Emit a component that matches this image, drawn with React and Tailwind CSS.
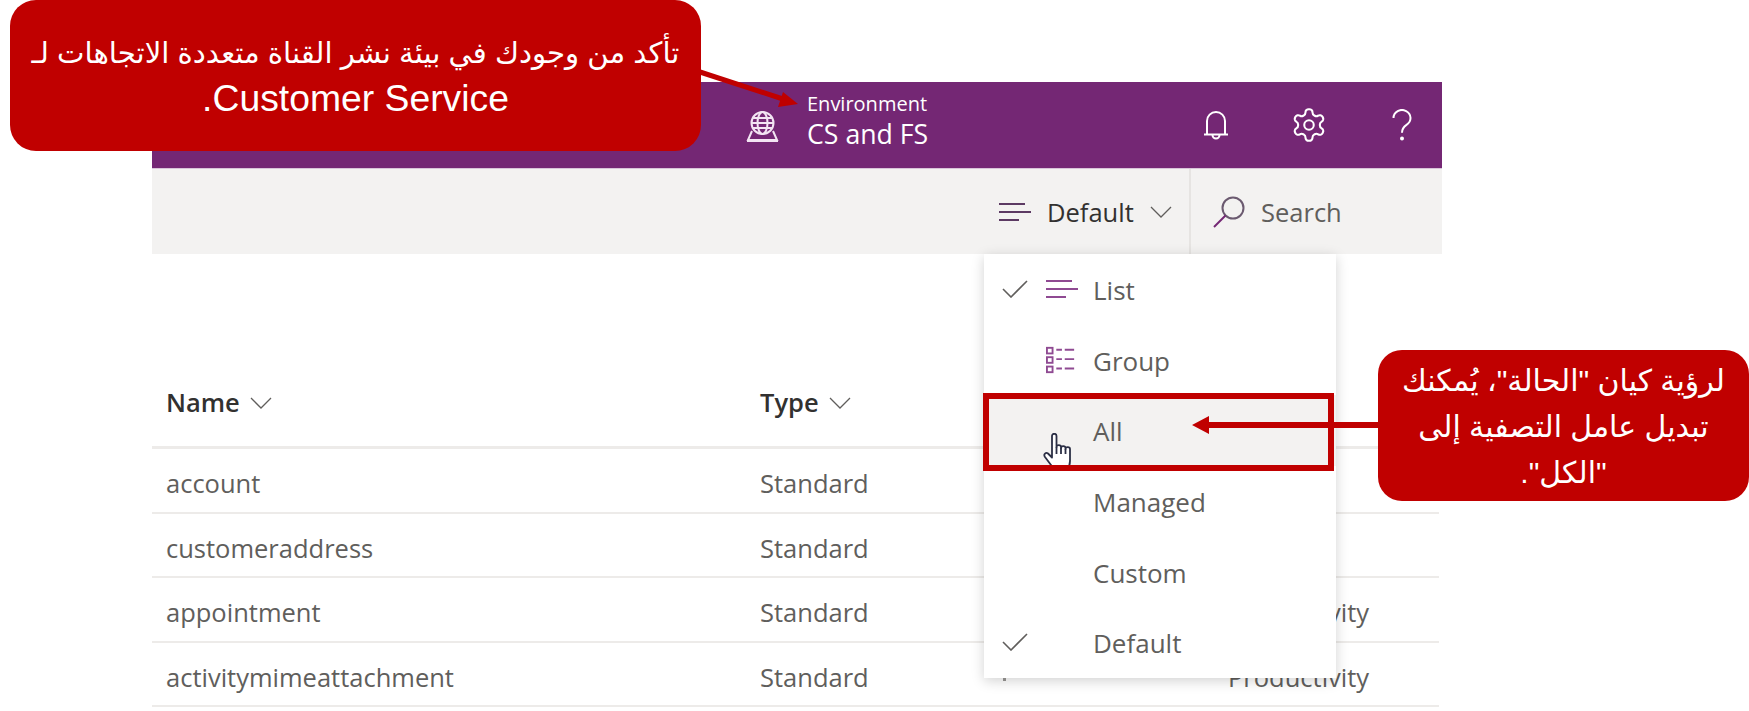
import React from 'react';

const uiFont = 'font-["Open_Sans",sans-serif]';
const calloutFont = 'font-["Liberation_Sans","DejaVu_Sans",sans-serif]';

const rows = [
  { name: 'account', type: 'Standard', group: '' },
  { name: 'customeraddress', type: 'Standard', group: '' },
  { name: 'appointment', type: 'Standard', group: 'Productivity' },
  { name: 'activitymimeattachment', type: 'Standard', group: 'Productivity' },
];

const Chevron = ({ className }) => (
  <svg className={className} viewBox="0 0 22 12" fill="none" stroke="currentColor" strokeWidth="1.3">
    <path d="M1 1l10 10L21 1" />
  </svg>
);

const Check = () => (
  <svg className="w-[26px] h-[18px] text-[#605e5c]" viewBox="0 0 26 18" fill="none" stroke="currentColor" strokeWidth="1.6">
    <path d="M1 9l8 8L25 1" />
  </svg>
);

const ListIcon = ({ className }) => (
  <svg className={className} viewBox="0 0 32 18" fill="none" stroke="currentColor" strokeWidth="2">
    <path d="M0 1h26M0 9h32M0 17h20" />
  </svg>
);

const GroupIcon = () => (
  <svg className="w-[32px] h-[28px] text-[#8f4a92]" viewBox="0 0 32 28" fill="none" stroke="currentColor" strokeWidth="2">
    <rect x="1" y="1" width="6" height="6" />
    <rect x="1" y="11" width="6" height="6" />
    <rect x="1" y="21" width="6" height="6" />
    <path d="M11 3h6M20 3h10M11 13h6M20 13h10M11 23h6M20 23h10" />
  </svg>
);

const GlobeIcon = () => (
  <svg className="w-[33px] h-[31px] text-[#f3e4f3]" viewBox="0 0 33 31" fill="none" stroke="currentColor" strokeWidth="2">
    <circle cx="16.5" cy="12" r="11" />
    <ellipse cx="16.5" cy="12" rx="5" ry="11" />
    <path d="M5.5 12h22M7 7h19M7 17h19" />
    <path d="M6 20l-4 9h29l-4-9" />
    <path d="M1 30h31" />
  </svg>
);

const BellIcon = () => (
  <svg className="w-[26px] h-[30px]" viewBox="0 0 26 30" fill="none" stroke="white" strokeWidth="2">
    <path d="M4 24V11a9 9 0 0 1 18 0v13" />
    <path d="M1 24.5h24" />
    <path d="M9.5 25a3.5 3.5 0 0 0 7 0" />
  </svg>
);

const GearIcon = () => (
  <svg className="w-[38px] h-[38px]" viewBox="0 0 24 24" fill="none" stroke="white" strokeWidth="1.3">
    <path d="M12.22 2h-.44a2 2 0 0 0-2 2v.18a2 2 0 0 1-1 1.73l-.43.25a2 2 0 0 1-2 0l-.15-.08a2 2 0 0 0-2.73.73l-.22.38a2 2 0 0 0 .73 2.73l.15.1a2 2 0 0 1 1 1.72v.51a2 2 0 0 1-1 1.74l-.15.09a2 2 0 0 0-.73 2.73l.22.38a2 2 0 0 0 2.73.73l.15-.08a2 2 0 0 1 2 0l.43.25a2 2 0 0 1 1 1.73V20a2 2 0 0 0 2 2h.44a2 2 0 0 0 2-2v-.18a2 2 0 0 1 1-1.73l.43-.25a2 2 0 0 1 2 0l.15.08a2 2 0 0 0 2.73-.73l.22-.39a2 2 0 0 0-.73-2.73l-.15-.08a2 2 0 0 1-1-1.74v-.5a2 2 0 0 1 1-1.74l.15-.09a2 2 0 0 0 .73-2.73l-.22-.38a2 2 0 0 0-2.73-.73l-.15.08a2 2 0 0 1-2 0l-.43-.25a2 2 0 0 1-1-1.73V4a2 2 0 0 0-2-2z" />
    <circle cx="12" cy="12" r="3" />
  </svg>
);

const HelpIcon = () => (
  <svg className="w-[20px] h-[32px]" viewBox="0 0 20 32" fill="none" stroke="white" strokeWidth="2">
    <path d="M1.5 9a8.5 8 0 1 1 13 6.8c-3 2-4.5 3.5-4.5 8" />
    <circle cx="10" cy="29.5" r="1" fill="white" />
  </svg>
);

const SearchIcon = () => (
  <svg className="w-[32px] h-[32px]" viewBox="0 0 32 32" fill="none" stroke="#742774" strokeWidth="2">
    <circle cx="20" cy="12" r="10.5" stroke="#6b5a70" />
    <path d="M12.5 19.5L1 31" />
  </svg>
);

const HandCursor = () => (
  <svg className="absolute left-[1043px] top-[433px] w-[30px] h-[38px]" viewBox="0 0 30 38" fill="white" stroke="#2b2f45" strokeWidth="1.8" strokeLinejoin="round">
    <path d="M9 3c0-3 4.5-3 4.5 0v11c0-2.5 4.5-2.5 4.5 0v1c0-2.5 4.5-2.5 4.5 0v1c0-2.5 4.5-2.5 4.5 0v12c0 4-1 6-3 8H11L2 24c-2-3 1-5 3-3.5l4 4z" />
    <path d="M13.5 14v7M18 15v6M22.5 16v5" fill="none" />
  </svg>
);

const MenuItem = ({ label, left, highlighted }) => (
  <div className={`flex items-center h-[70.6px] pl-[18px] ${highlighted ? 'bg-[#f3f2f1]' : ''}`}>
    <div className="w-[26px] flex items-center">{left === 'check' || left === 'list-check' ? <Check /> : null}</div>
    <div className="w-[48px] pl-[18px] flex items-center">
      {left === 'list-check' && <ListIcon className="w-[32px] h-[18px] text-[#8f4a92] shrink-0" />}
      {left === 'group' && <GroupIcon />}
    </div>
    <span className="ml-[17px] pt-[3px] text-[26px] text-[#605e5c]">{label}</span>
  </div>
);

export default function App() {
  return (
    <div className={`relative w-[1749px] h-[711px] overflow-hidden bg-white ${uiFont}`}>
      <div className="ml-[152px] pt-[82px] w-[1290px]">
        {/* top bar */}
        <div className="flex items-center h-[87px] bg-[#742774] border-b border-[#d9c4d9] text-white">
          <div className="ml-[594px] mt-[2px]"><GlobeIcon /></div>
          <div className="ml-[28px] mb-[6px] flex flex-col">
            <span className="text-[20px] leading-[24px]">Environment</span>
            <span className="text-[26.7px] leading-[36px]">CS and FS</span>
          </div>
          <div className="ml-auto mr-[20px] flex items-center gap-[53px]">
            <div className="w-[40px] flex justify-center"><BellIcon /></div>
            <div className="w-[40px] flex justify-center"><GearIcon /></div>
            <div className="w-[40px] flex justify-center"><HelpIcon /></div>
          </div>
        </div>

        {/* toolbar */}
        <div className="flex items-center h-[85px] pl-[847px] bg-[#f3f2f1]">
          <ListIcon className="w-[32px] h-[18px] text-[#5c3a63] shrink-0" />
          <span className="ml-[16px] w-[86px] pt-[2px] text-[25.5px] text-[#323130]">Default</span>
          <Chevron className="ml-[17px] w-[22px] h-[12px] text-[#605e5c] shrink-0" />
          <div className="ml-[17px] w-[2px] self-stretch bg-[#e6e4e2]" />
          <div className="ml-[22px]"><SearchIcon /></div>
          <span className="ml-[16px] pt-[2px] text-[25.5px] text-[#605e5c]">Search</span>
        </div>

        {/* table */}
        <div className="flex items-center h-[195px] mr-[3px] pt-[105px] border-b-[3px] border-[#edebe9] text-[25.5px] font-semibold text-[#323130]">
          <div className="w-[608px] pl-[14px] flex items-center">
            Name
            <Chevron className="ml-[10px] w-[22px] h-[12px] text-[#605e5c]" />
          </div>
          <div className="flex items-center">
            Type
            <Chevron className="ml-[10px] w-[22px] h-[12px] text-[#605e5c]" />
          </div>
        </div>
        {rows.map((row) => (
          <div key={row.name} className="grid grid-cols-[608px_468px_1fr] items-center h-[64.5px] mr-[3px] pt-[6px] border-b-2 border-[#edebe9] text-[25.5px] text-[#605e5c]">
            <span className="pl-[14px]">{row.name}</span>
            <span>{row.type}</span>
            <span>{row.group}</span>
          </div>
        ))}
      </div>

      {/* dropdown menu */}
      <div className="absolute left-[984px] top-[254px] w-[352px] h-[424px] bg-white shadow-[0_3px_12px_rgba(0,0,0,0.18)]">
        <MenuItem label="List" left="list-check" />
        <MenuItem label="Group" left="group" />
        <MenuItem label="All" highlighted />
        <MenuItem label="Managed" />
        <MenuItem label="Custom" />
        <MenuItem label="Default" left="check" />
      </div>
      <div className="absolute left-[1003px] top-[678px] w-[3px] h-[3px] bg-[#8a8886]" />

      <HandCursor />

      {/* red annotations */}
      <div className="absolute left-[983px] top-[393px] w-[351px] h-[78px] border-[6px] border-[#c00000]" />
      <svg className="absolute left-[1192px] top-[414px] w-[190px] h-[22px]" viewBox="0 0 190 22">
        <path d="M0 11L17 2v6h173v6H17v6z" fill="#c00000" />
      </svg>
      <svg className="absolute left-[700px] top-[68px] w-[100px] h-[42px]" viewBox="0 0 100 42">
        <path d="M0 4L86 32" stroke="#c00000" strokeWidth="5" />
        <path d="M98 36L83 24L78 39z" fill="#c00000" />
      </svg>

      <div dir="rtl" className={`absolute left-[10px] top-0 w-[691px] h-[151px] rounded-[26px] bg-[#c00000] pt-[31px] text-center text-white ${calloutFont}`}>
        <div className="text-[29.2px] leading-[44px] whitespace-nowrap">تأكد من وجودك في بيئة نشر القناة متعددة الاتجاهات لـ</div>
        <div dir="rtl" className="text-[37.3px] leading-[46px]">Customer Service.</div>
      </div>
      <div dir="rtl" className={`absolute left-[1378px] top-[350px] w-[371px] h-[151px] rounded-[24px] bg-[#c00000] pt-[8px] text-center text-white text-[30px] leading-[46px] ${calloutFont}`}>
        <div className="whitespace-nowrap">لرؤية كيان "الحالة"، يُمكنك</div>
        <div className="whitespace-nowrap">تبديل عامل التصفية إلى</div>
        <div className="whitespace-nowrap">"الكل".</div>
      </div>
    </div>
  );
}
